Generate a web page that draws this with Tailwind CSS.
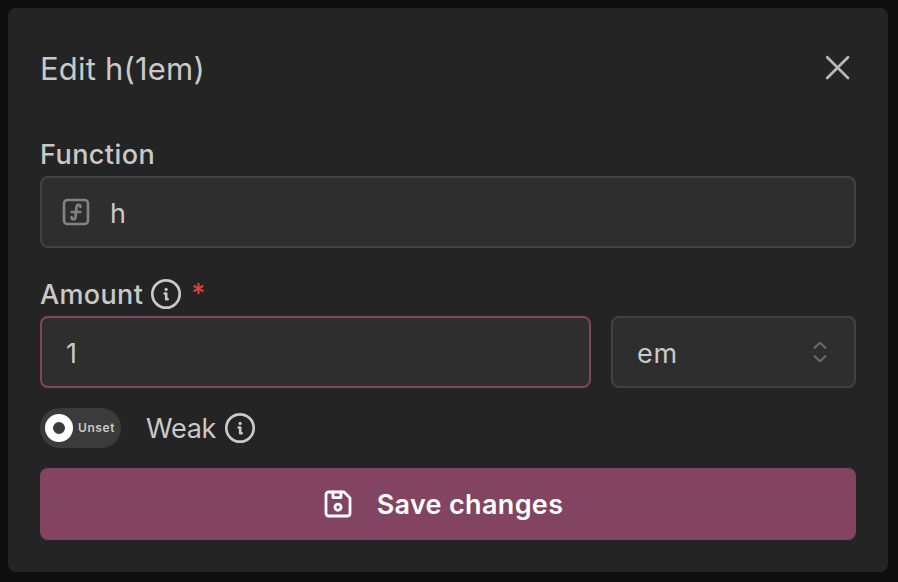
<!DOCTYPE html>
<html lang="en">
<head>
<meta charset="utf-8">
<title>Edit h(1em)</title>
<script src="https://cdn.jsdelivr.net/npm/@tailwindcss/browser@4"></script>
</head>
<body class="bg-[#0e0e0e] font-['Inter',sans-serif] text-[#c9c9c9] w-[898px] h-[582px] overflow-hidden p-2">
<main class="w-[880px] h-[564px] rounded-lg bg-[#242424] px-8 flex flex-col">
  <header class="h-[124px] flex items-center justify-between">
    <h1 class="text-[31px] leading-10 pb-[2px] tracking-[0.2px] whitespace-nowrap">Edit h(1em)</h1>
    <button class="w-9 h-9 mb-1" aria-label="Close">
      <svg width="36" height="36" viewBox="0 0 36 36" fill="none" stroke="#b8b8b8" stroke-width="2.7" stroke-linecap="round"><path d="M7.2 7.2 28 28M28 7.2 7.2 28"/></svg>
    </button>
  </header>
  <label class="h-11 pt-[3px] flex items-center text-[27px] font-medium tracking-[0.45px]">Function</label>
  <div class="h-[72px] rounded-lg border-2 border-[#424242] bg-[#2e2e2e] flex items-center pl-[18px]">
    <svg width="32" height="32" viewBox="0 0 24 24" fill="none" stroke="#828282" stroke-width="2" stroke-linecap="round" stroke-linejoin="round"><path d="M3 5.667A2.667 2.667 0 0 1 5.667 3h12.666A2.667 2.667 0 0 1 21 5.667v12.666A2.667 2.667 0 0 1 18.333 21H5.667A2.667 2.667 0 0 1 3 18.333z"/><path d="M8.7 15.8v.25C8.7 16.8 9.3 17.4 10.05 17.4c.8 0 1.4-.6 1.5-1.3l.9-8.2A1.45 1.45 0 0 1 13.9 6.6C14.7 6.6 15.3 7.2 15.3 7.95v.25M8.8 12h6.4"/></svg>
    <span class="ml-[18px] pt-1 text-[27px]">h</span>
  </div>
  <div class="mt-6 h-11 flex items-center text-[27px] font-medium tracking-[0.35px]">
    <span class="pt-[3px]">Amount</span>
    <svg class="ml-[7px]" width="32" height="32" viewBox="0 0 32 32" fill="none"><circle cx="16" cy="16" r="13.7" stroke="#c9c9c9" stroke-width="2.7"/><path d="M14.7 15.5h1.5v5.7h1.5" stroke="#c9c9c9" stroke-width="2.6" stroke-linecap="round" stroke-linejoin="round"/><circle cx="16.1" cy="11.4" r="1.6" fill="#c9c9c9"/></svg>
    <span class="ml-[9px] text-[#d8453b]">*</span>
  </div>
  <div class="flex gap-5">
    <div class="w-[551px] h-[72px] rounded-lg border-2 border-[#834462] bg-[#2e2e2e] flex items-center pl-6 text-[27px]"><span class="pt-1">1</span></div>
    <div class="w-[245px] h-[72px] rounded-lg border-2 border-[#424242] bg-[#2e2e2e] flex items-center justify-between pl-6 pr-[18px] text-[27px]">
      <span class="pt-1 tracking-[0.8px]">em</span>
      <svg width="32" height="32" viewBox="0 0 32 32" fill="none" stroke="#696969" stroke-width="2.2" stroke-linecap="round" stroke-linejoin="round"><path d="m10.6 11.8 5.4-5.1 5.4 5.1M10.6 20.2l5.4 5.1 5.4-5.1"/></svg>
    </div>
  </div>
  <div class="mt-5 h-10 flex items-center">
    <div class="w-[81px] h-10 rounded-full bg-[#3b3b3b] flex items-center pl-[5px]">
      <span class="w-7 h-7 rounded-full border-8 border-white"></span>
      <span class="ml-[5px] text-[12px] font-semibold tracking-[0.6px]">Unset</span>
    </div>
    <span class="ml-[25px] pt-[3px] text-[27px] tracking-[-0.3px]">Weak</span>
    <svg class="ml-2" width="32" height="32" viewBox="0 0 32 32" fill="none"><circle cx="16" cy="16" r="13.7" stroke="#c9c9c9" stroke-width="2.7"/><path d="M14.7 15.5h1.5v5.7h1.5" stroke="#c9c9c9" stroke-width="2.6" stroke-linecap="round" stroke-linejoin="round"/><circle cx="16.1" cy="11.4" r="1.6" fill="#c9c9c9"/></svg>
  </div>
  <button class="mt-5 h-[72px] rounded-lg bg-[#834462] text-white flex items-center justify-center pr-[11px] text-[27px] font-semibold tracking-[0.33px]">
    <svg width="32" height="32" viewBox="0 0 24 24" fill="none" stroke="white" stroke-width="2.1" stroke-linecap="round" stroke-linejoin="round"><path d="M5 3h11.5L21 7.5V19a2 2 0 0 1-2 2H5a2 2 0 0 1-2-2V5a2 2 0 0 1 2-2z"/><path d="M8.2 3v4.2h6V3"/><circle cx="12" cy="14.4" r="2.3"/></svg>
    <span class="ml-[23px] pt-[3px]">Save changes</span>
  </button>
</main>
</body>
</html>
